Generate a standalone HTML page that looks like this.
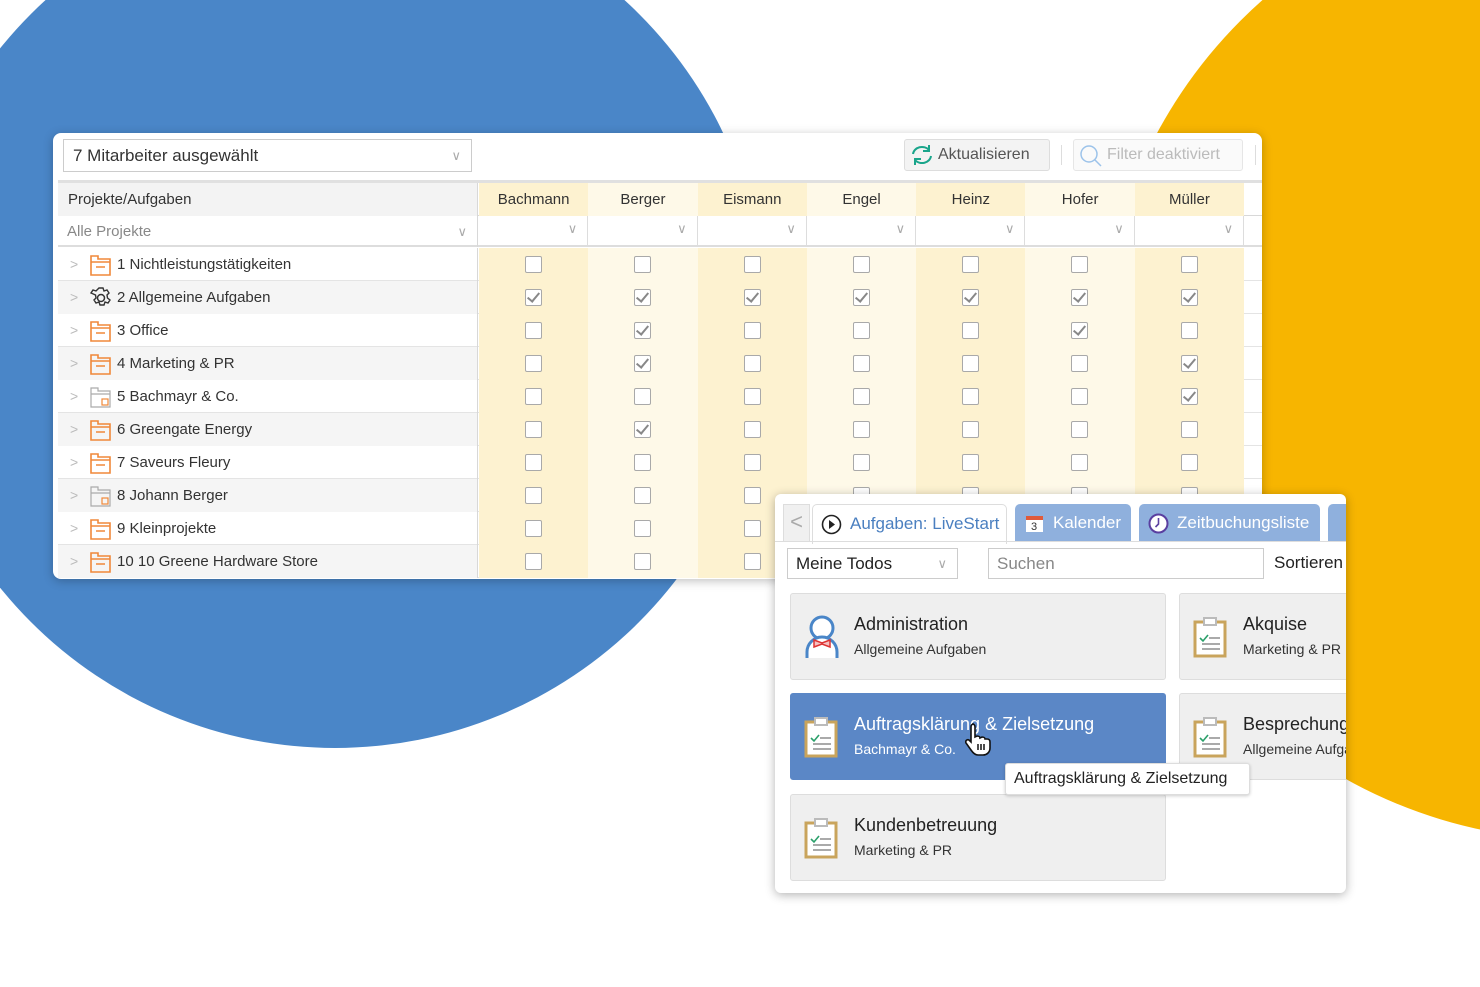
<!DOCTYPE html>
<html><head><meta charset="utf-8"><style>
*{box-sizing:border-box;margin:0;padding:0}
body{width:1480px;height:987px;position:relative;overflow:hidden;background:#fff;font-family:"Liberation Sans","DejaVu Sans",sans-serif;color:#333}
.abs{position:absolute}
.circ{position:absolute;border-radius:50%}
#tbl{left:53px;top:133px;width:1209px;height:446px;background:#fff;border-radius:8px;box-shadow:0 2px 10px rgba(0,0,0,.25);overflow:hidden}
.row{position:absolute;left:5px;width:1204px;height:33px;border-bottom:1px solid #e4e4e4}
.lc{position:absolute;left:0;top:0;width:420px;height:33px;border-right:1px solid #d8d8d8;font-size:15px;line-height:33px}
.lc .chev{position:absolute;left:12px;top:0;color:#bbb;font-size:14px}
.lc .ic{position:absolute;left:31px;top:5px}
.lc .t{position:absolute;left:59px}
.cells{position:absolute;left:421px;top:0;height:33px;display:flex}
.c{width:109.3px;height:33px;position:relative}
.c:nth-child(odd){background:#fdf2d0}
.c:nth-child(even){background:#fef9e8}
.cb{position:absolute;left:46px;top:8px;width:17px;height:17px;border:1.5px solid #a9a9a9;background:#fff;border-radius:2px}
.cb.k::after{content:"";position:absolute;left:4px;top:0px;width:5px;height:10px;border:solid #888;border-width:0 2px 2px 0;transform:rotate(40deg)}
.hdr{font-size:15px;text-align:center;line-height:33px}
#p2{left:775px;top:494px;width:571px;height:399px;background:#fff;border-radius:6px;box-shadow:0 2px 10px rgba(0,0,0,.3);overflow:hidden}
.card{position:absolute;width:376px;height:87px;background:#efefef;border:1px solid #ddd;border-radius:3px}
.card .h{position:absolute;left:63px;top:20px;font-size:18px;color:#222}
.card .s{position:absolute;left:63px;top:47px;font-size:14px;color:#333}
.card svg{position:absolute;left:13px;top:22px}
.tab{position:absolute;top:10px;height:38px;border-radius:5px 5px 0 0;font-size:17px;line-height:38px;color:#fff;background:#8fb0dd}
</style></head><body>
<div class="circ" style="left:-95px;top:-112px;width:860px;height:860px;background:#4a86c8"></div>
<div class="circ" style="left:1100px;top:-120px;width:960px;height:960px;background:#f7b500"></div>

<div id="tbl" class="abs">
  <div class="abs" style="left:10px;top:6px;width:409px;height:33px;border:1px solid #ccc;font-size:17px;line-height:31px;padding-left:9px;color:#333">7 Mitarbeiter ausgewählt<span style="position:absolute;right:10px;top:0;color:#aaa;font-size:13px">&#8744;</span></div>
  <div class="abs" style="left:851px;top:6px;width:146px;height:32px;border:1px solid #ddd;border-radius:3px;background:#f3f3f3;font-size:16px;line-height:30px;padding-left:33px;color:#555">Aktualisieren
    <svg class="abs" style="left:5px;top:4px" width="24" height="22" viewBox="0 0 24 22"><path d="M3 10a9 8 0 0 1 16-4M21 12a9 8 0 0 1-16 4" fill="none" stroke="#1aa58b" stroke-width="2"/><path d="M19 1v6h-6M5 21v-6h6" fill="none" stroke="#1aa58b" stroke-width="2"/></svg></div>
  <div class="abs" style="left:1008px;top:12px;width:1px;height:20px;background:#ddd"></div>
  <div class="abs" style="left:1020px;top:6px;width:170px;height:32px;border:1px solid #e6e6e6;border-radius:3px;background:#fafafa;font-size:16px;line-height:30px;padding-left:33px;color:#bbb">Filter deaktiviert
    <svg class="abs" style="left:5px;top:4px" width="24" height="24"><circle cx="10" cy="10" r="8" fill="none" stroke="#9cc3ea" stroke-width="1.5"/><path d="M16 16l6 6" stroke="#9cc3ea" stroke-width="1.5"/></svg></div>
  <div class="abs" style="left:1202px;top:12px;width:1px;height:20px;background:#ddd"></div>
  <div class="abs" style="left:5px;top:47px;width:1204px;height:3px;background:#e0e0e0"></div>
  <div class="row" style="top:50px;border-bottom:1px solid #d8d8d8">
    <div class="lc" style="background:#f3f3f3;padding-left:10px">Projekte/Aufgaben</div>
    <div class="cells hdr"><div class="c">Bachmann</div><div class="c">Berger</div><div class="c">Eismann</div><div class="c">Engel</div><div class="c">Heinz</div><div class="c">Hofer</div><div class="c">Müller</div></div>
  </div>
  <div class="row" style="top:83px;height:31px;border-bottom:2px solid #ddd">
    <div class="lc" style="height:31px;line-height:31px;color:#888;padding-left:9px">Alle Projekte<span style="position:absolute;right:10px;color:#aaa;font-size:13px">&#8744;</span></div>
    <div class="cells" style="height:29px;background:#fff">
      <div class="c" style="background:#fff;border-right:1px solid #ddd;height:29px"><span class="abs" style="right:10px;top:5px;color:#aaa;font-size:13px">&#8744;</span></div><div class="c" style="background:#fff;border-right:1px solid #ddd;height:29px"><span class="abs" style="right:10px;top:5px;color:#aaa;font-size:13px">&#8744;</span></div><div class="c" style="background:#fff;border-right:1px solid #ddd;height:29px"><span class="abs" style="right:10px;top:5px;color:#aaa;font-size:13px">&#8744;</span></div><div class="c" style="background:#fff;border-right:1px solid #ddd;height:29px"><span class="abs" style="right:10px;top:5px;color:#aaa;font-size:13px">&#8744;</span></div><div class="c" style="background:#fff;border-right:1px solid #ddd;height:29px"><span class="abs" style="right:10px;top:5px;color:#aaa;font-size:13px">&#8744;</span></div><div class="c" style="background:#fff;border-right:1px solid #ddd;height:29px"><span class="abs" style="right:10px;top:5px;color:#aaa;font-size:13px">&#8744;</span></div><div class="c" style="background:#fff;border-right:1px solid #ddd;height:29px"><span class="abs" style="right:10px;top:5px;color:#aaa;font-size:13px">&#8744;</span></div>
    </div>
  </div>
  <svg width="0" height="0" style="position:absolute"><defs>
    <g id="fo"><path d="M2 3h7v3h12v16H2z M2 9h19 M7 14h9" fill="none" stroke="#f0883a" stroke-width="1.6"/></g>
    <g id="fg"><path d="M2 3h7v3h12v16H2z M2 9h19" fill="none" stroke="#aaa" stroke-width="1.2"/><rect x="13" y="14" width="6" height="6" fill="none" stroke="#f0883a" stroke-width="1.2"/></g>
  </defs></svg>
  <div class="row" style="top:115px"><div class="lc"><span class="chev">&gt;</span><svg class="ic" width="24" height="24"><use href="#fo"/></svg><span class="t">1 Nichtleistungstätigkeiten</span></div><div class="cells"><div class="c"><i class="cb"></i></div><div class="c"><i class="cb"></i></div><div class="c"><i class="cb"></i></div><div class="c"><i class="cb"></i></div><div class="c"><i class="cb"></i></div><div class="c"><i class="cb"></i></div><div class="c"><i class="cb"></i></div></div></div>
  <div class="row" style="top:148px"><div class="lc" style="background:#f5f5f5"><span class="chev">&gt;</span><svg class="ic" width="24" height="24" viewBox="0 0 24 24"><circle cx="12" cy="12" r="3.5" fill="none" stroke="#333" stroke-width="1.5"/><path d="M10 2h4l1 3 3-1 2 3-2 2 .5 3 2.5 2-2 3-3-1-1 3h-4l-1-3-3 1-2-3 2-2-.5-3L2 7l2-3 3 1z" fill="none" stroke="#333" stroke-width="1.4"/></svg><span class="t">2 Allgemeine Aufgaben</span></div><div class="cells"><div class="c"><i class="cb k"></i></div><div class="c"><i class="cb k"></i></div><div class="c"><i class="cb k"></i></div><div class="c"><i class="cb k"></i></div><div class="c"><i class="cb k"></i></div><div class="c"><i class="cb k"></i></div><div class="c"><i class="cb k"></i></div></div></div>
  <div class="row" style="top:181px"><div class="lc"><span class="chev">&gt;</span><svg class="ic" width="24" height="24"><use href="#fo"/></svg><span class="t">3 Office</span></div><div class="cells"><div class="c"><i class="cb"></i></div><div class="c"><i class="cb k"></i></div><div class="c"><i class="cb"></i></div><div class="c"><i class="cb"></i></div><div class="c"><i class="cb"></i></div><div class="c"><i class="cb k"></i></div><div class="c"><i class="cb"></i></div></div></div>
  <div class="row" style="top:214px"><div class="lc" style="background:#f5f5f5"><span class="chev">&gt;</span><svg class="ic" width="24" height="24"><use href="#fo"/></svg><span class="t">4 Marketing &amp; PR</span></div><div class="cells"><div class="c"><i class="cb"></i></div><div class="c"><i class="cb k"></i></div><div class="c"><i class="cb"></i></div><div class="c"><i class="cb"></i></div><div class="c"><i class="cb"></i></div><div class="c"><i class="cb"></i></div><div class="c"><i class="cb k"></i></div></div></div>
  <div class="row" style="top:247px"><div class="lc"><span class="chev">&gt;</span><svg class="ic" width="24" height="24"><use href="#fg"/></svg><span class="t">5 Bachmayr &amp; Co.</span></div><div class="cells"><div class="c"><i class="cb"></i></div><div class="c"><i class="cb"></i></div><div class="c"><i class="cb"></i></div><div class="c"><i class="cb"></i></div><div class="c"><i class="cb"></i></div><div class="c"><i class="cb"></i></div><div class="c"><i class="cb k"></i></div></div></div>
  <div class="row" style="top:280px"><div class="lc" style="background:#f5f5f5"><span class="chev">&gt;</span><svg class="ic" width="24" height="24"><use href="#fo"/></svg><span class="t">6 Greengate Energy</span></div><div class="cells"><div class="c"><i class="cb"></i></div><div class="c"><i class="cb k"></i></div><div class="c"><i class="cb"></i></div><div class="c"><i class="cb"></i></div><div class="c"><i class="cb"></i></div><div class="c"><i class="cb"></i></div><div class="c"><i class="cb"></i></div></div></div>
  <div class="row" style="top:313px"><div class="lc"><span class="chev">&gt;</span><svg class="ic" width="24" height="24"><use href="#fo"/></svg><span class="t">7 Saveurs Fleury</span></div><div class="cells"><div class="c"><i class="cb"></i></div><div class="c"><i class="cb"></i></div><div class="c"><i class="cb"></i></div><div class="c"><i class="cb"></i></div><div class="c"><i class="cb"></i></div><div class="c"><i class="cb"></i></div><div class="c"><i class="cb"></i></div></div></div>
  <div class="row" style="top:346px"><div class="lc" style="background:#f5f5f5"><span class="chev">&gt;</span><svg class="ic" width="24" height="24"><use href="#fg"/></svg><span class="t">8 Johann Berger</span></div><div class="cells"><div class="c"><i class="cb"></i></div><div class="c"><i class="cb"></i></div><div class="c"><i class="cb"></i></div><div class="c"><i class="cb"></i></div><div class="c"><i class="cb"></i></div><div class="c"><i class="cb"></i></div><div class="c"><i class="cb"></i></div></div></div>
  <div class="row" style="top:379px"><div class="lc"><span class="chev">&gt;</span><svg class="ic" width="24" height="24"><use href="#fo"/></svg><span class="t">9 Kleinprojekte</span></div><div class="cells"><div class="c"><i class="cb"></i></div><div class="c"><i class="cb"></i></div><div class="c"><i class="cb"></i></div><div class="c"><i class="cb"></i></div><div class="c"><i class="cb"></i></div><div class="c"><i class="cb"></i></div><div class="c"><i class="cb"></i></div></div></div>
  <div class="row" style="top:412px"><div class="lc" style="background:#f5f5f5"><span class="chev">&gt;</span><svg class="ic" width="24" height="24"><use href="#fo"/></svg><span class="t">10 10 Greene Hardware Store</span></div><div class="cells"><div class="c"><i class="cb"></i></div><div class="c"><i class="cb"></i></div><div class="c"><i class="cb"></i></div><div class="c"><i class="cb"></i></div><div class="c"><i class="cb"></i></div><div class="c"><i class="cb"></i></div><div class="c"><i class="cb"></i></div></div></div>
</div>

<svg width="0" height="0" style="position:absolute"><defs>
  <g id="clip"><rect x="2" y="6" width="30" height="34" fill="#fff" stroke="#c9a45c" stroke-width="3"/><rect x="11" y="2" width="12" height="7" fill="#fff" stroke="#bbb" stroke-width="2"/><path d="M7 22l3 3 5-6" fill="none" stroke="#2aa06a" stroke-width="1.6"/><path d="M16 22h11M9 28h18M9 33h18" stroke="#aaa" stroke-width="2"/></g>
</defs></svg>
<div id="p2" class="abs">
  <div class="abs" style="left:8px;top:10px;width:27px;height:38px;background:#f0f0f0;border:1px solid #ddd;color:#aaa;font-size:22px;line-height:34px;text-align:center">&lt;</div>
  <div class="abs" style="left:37px;top:10px;width:195px;height:40px;background:#fff;border:1px solid #ddd;border-bottom:none;border-radius:5px 5px 0 0;font-size:17px;line-height:38px;color:#4a7fc0;padding-left:37px">Aufgaben: LiveStart
    <svg class="abs" style="left:8px;top:9px" width="21" height="21"><circle cx="10.5" cy="10.5" r="9" fill="none" stroke="#222" stroke-width="1.6"/><path d="M8 6l6 4.5L8 15z" fill="#222"/></svg></div>
  <div class="tab" style="left:240px;width:116px;padding-left:38px">Kalender<svg class="abs" style="left:10px;top:11px" width="19" height="18"><rect x="1" y="1" width="17" height="16" fill="#fff"/><rect x="1" y="1" width="17" height="4" fill="#e05a3a"/><text x="6" y="15" font-size="11" font-family="Liberation Sans" fill="#333">3</text></svg></div>
  <div class="tab" style="left:364px;width:181px;padding-left:38px">Zeitbuchungsliste<svg class="abs" style="left:9px;top:9px" width="21" height="21"><circle cx="10.5" cy="10.5" r="9" fill="#fff" stroke="#5a3fa0" stroke-width="2"/><path d="M10.5 5v6l-3 3" fill="none" stroke="#5a3fa0" stroke-width="1.6"/></svg></div>
  <div class="tab" style="left:553px;width:30px"></div>
  <div class="abs" style="left:0;top:47px;width:571px;height:1px;background:#ddd"></div>
  <div class="abs" style="left:12px;top:54px;width:171px;height:31px;border:1px solid #ccc;font-size:17px;line-height:29px;padding-left:8px;color:#222">Meine Todos<span class="abs" style="right:10px;top:0;color:#aaa;font-size:13px">&#8744;</span></div>
  <div class="abs" style="left:213px;top:54px;width:276px;height:31px;border:1px solid #ccc;font-size:17px;line-height:29px;padding-left:8px;color:#888">Suchen</div>
  <div class="abs" style="left:499px;top:59px;font-size:17px;color:#222">Sortieren</div>
  <div class="card" style="left:15px;top:99px"><svg width="36" height="44" style="left:13px;top:20px"><circle cx="18" cy="14" r="11" fill="#fff" stroke="#4a86c8" stroke-width="3"/><path d="M3 44v-6a15 15 0 0 1 30 0v6" fill="#fff" stroke="#4a86c8" stroke-width="3"/><path d="M10 26l8 3 8-3v7l-8-3-8 3z" fill="#f6c0c0" stroke="#d33" stroke-width="1.5"/></svg><div class="h">Administration</div><div class="s">Allgemeine Aufgaben</div></div>
  <div class="card" style="left:404px;top:99px"><svg width="36" height="44"><use href="#clip"/></svg><div class="h">Akquise</div><div class="s">Marketing &amp; PR</div></div>
  <div class="card" style="left:15px;top:199px;background:#5b87c6;border-color:#5b87c6"><svg width="36" height="44"><use href="#clip"/></svg><div class="h" style="color:#fff">Auftragsklärung &amp; Zielsetzung</div><div class="s" style="color:#fff">Bachmayr &amp; Co.</div></div>
  <div class="card" style="left:404px;top:199px"><svg width="36" height="44"><use href="#clip"/></svg><div class="h" style="white-space:nowrap">Besprechung</div><div class="s" style="white-space:nowrap">Allgemeine Aufgaben</div></div>
  <div class="card" style="left:15px;top:300px"><svg width="36" height="44"><use href="#clip"/></svg><div class="h">Kundenbetreuung</div><div class="s">Marketing &amp; PR</div></div>
  <div class="abs" style="left:230px;top:269px;width:245px;height:32px;background:#fff;border:1px solid #ddd;border-radius:3px;box-shadow:0 1px 3px rgba(0,0,0,.2);font-size:16px;line-height:30px;padding-left:8px;color:#222">Auftragsklärung &amp; Zielsetzung</div>
  <svg class="abs" style="left:190px;top:228px" width="26" height="34" viewBox="0 0 26 34"><path d="M7 2c2 0 3 1 3 3v10l2-1c2 0 3 1 3 2l2-1c2 0 3 1 3 2l2 0c2 0 3 1 3 3v6c0 4-3 7-7 7h-5c-3 0-5-2-7-5l-5-7c-1-2 1-4 3-3l2 2V5c0-2 1-3 3-3z" fill="#fff" stroke="#111" stroke-width="1.6"/><path d="M13 22v6M16 22v6M19 22v6" stroke="#111" stroke-width="1.5"/></svg>
</div>
</body></html>
